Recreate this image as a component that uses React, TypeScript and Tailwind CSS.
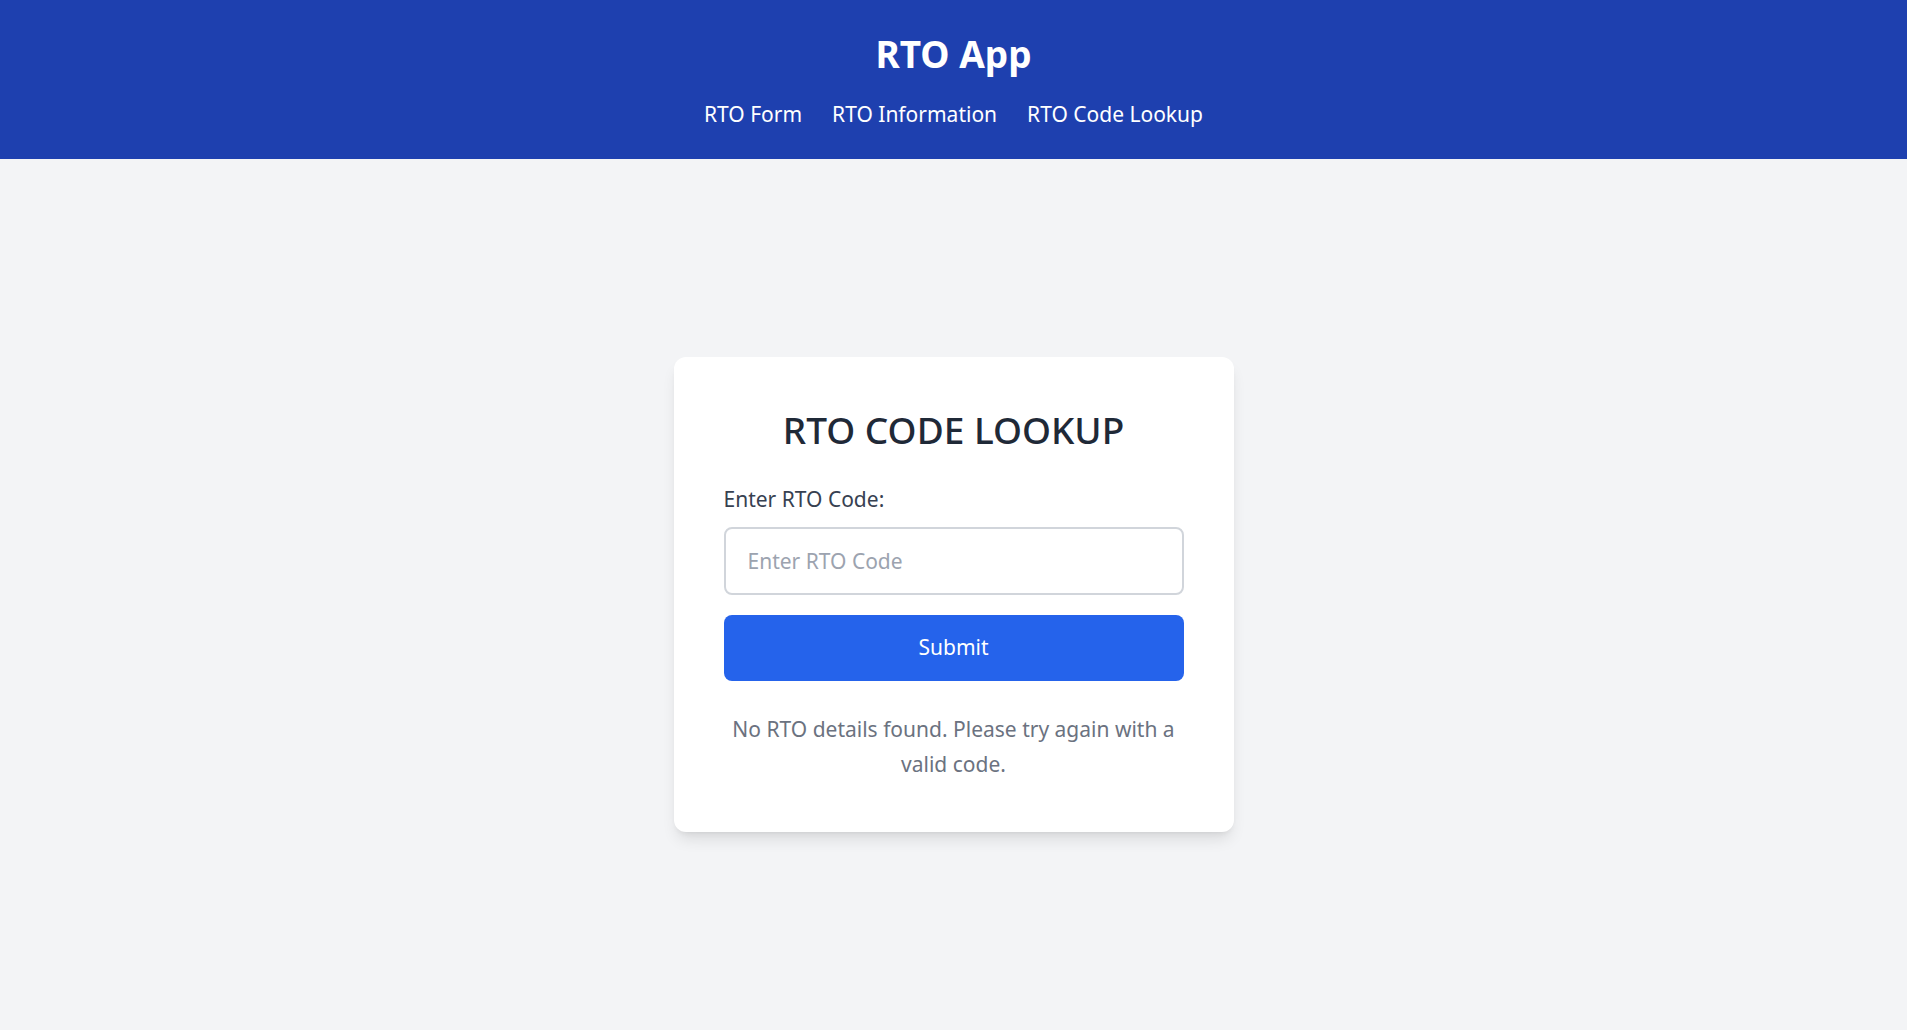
import React, { useState } from 'react'

const NAV_ITEMS = ['RTO Form', 'RTO Information', 'RTO Code Lookup']

export default function App() {
  const [code, setCode] = useState('')
  const [submitted, setSubmitted] = useState(true)

  return (
    <div className="min-h-screen flex flex-col bg-[#f3f4f6] font-['Noto_Sans',sans-serif]">
      {/* Header */}
      <header className="bg-[#1e40af] text-white h-[159px] flex flex-col items-center pt-[30px]">
        <h1 className="text-[37px] leading-[48px] font-bold">RTO App</h1>
        <nav className="flex gap-[30px] mt-[21px] text-[21px] leading-[30px]">
          {NAV_ITEMS.map((item) => (
            <a key={item} href="#" className="hover:underline">
              {item}
            </a>
          ))}
        </nav>
      </header>

      {/* Main */}
      <main className="flex-1 flex items-center justify-center">
        <div className="w-[560px] bg-white rounded-xl shadow-lg p-[50px]">
          <h2 className="text-[37px] leading-[46px] font-medium text-[#1f2937] text-center mb-[32px]">
            RTO CODE LOOKUP
          </h2>
          <label className="block text-[21px] leading-[28px] text-[#374151] mb-[14px]">Enter RTO Code:</label>
          <input
            type="text"
            value={code}
            onChange={(e) => setCode(e.target.value)}
            placeholder="Enter RTO Code"
            className="w-full h-[68px] px-[22px] text-[21px] border-2 border-[#d1d5db] rounded-lg outline-none placeholder:text-[#9ca3af]"
          />
          <button
            onClick={() => setSubmitted(true)}
            className="w-full h-[66px] mt-[20px] bg-[#2563eb] text-white text-[21px] rounded-lg"
          >
            Submit
          </button>
          {submitted && (
            <p className="mt-[31px] text-center text-[#6b7280] text-[21px] leading-[35px]">
              No RTO details found. Please try again with a valid code.
            </p>
          )}
        </div>
      </main>
    </div>
  )
}
